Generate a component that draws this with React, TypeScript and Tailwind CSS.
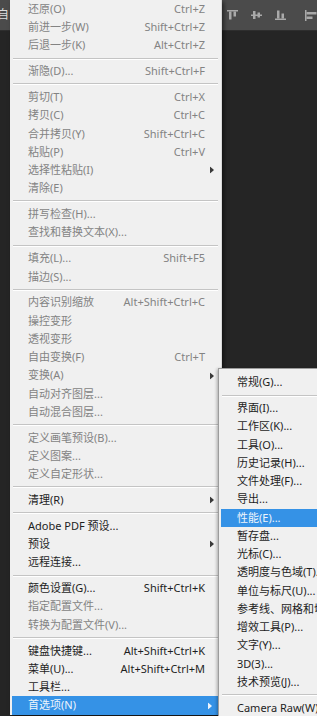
import clsx from "clsx";

type Item =
  | "sep"
  | { t: string; k?: string; d?: boolean; sub?: boolean; hl?: boolean };

// ─── Menu data ───────────────────────────────────────────────────────────────

const editMenu: Item[] = [
  { t: "还原(O)", k: "Ctrl+Z", d: true },
  { t: "前进一步(W)", k: "Shift+Ctrl+Z", d: true },
  { t: "后退一步(K)", k: "Alt+Ctrl+Z", d: true },
  "sep",
  { t: "渐隐(D)...", k: "Shift+Ctrl+F", d: true },
  "sep",
  { t: "剪切(T)", k: "Ctrl+X", d: true },
  { t: "拷贝(C)", k: "Ctrl+C", d: true },
  { t: "合并拷贝(Y)", k: "Shift+Ctrl+C", d: true },
  { t: "粘贴(P)", k: "Ctrl+V", d: true },
  { t: "选择性粘贴(I)", d: true, sub: true },
  { t: "清除(E)", d: true },
  "sep",
  { t: "拼写检查(H)...", d: true },
  { t: "查找和替换文本(X)...", d: true },
  "sep",
  { t: "填充(L)...", k: "Shift+F5", d: true },
  { t: "描边(S)...", d: true },
  "sep",
  { t: "内容识别缩放", k: "Alt+Shift+Ctrl+C", d: true },
  { t: "操控变形", d: true },
  { t: "透视变形", d: true },
  { t: "自由变换(F)", k: "Ctrl+T", d: true },
  { t: "变换(A)", d: true, sub: true },
  { t: "自动对齐图层...", d: true },
  { t: "自动混合图层...", d: true },
  "sep",
  { t: "定义画笔预设(B)...", d: true },
  { t: "定义图案...", d: true },
  { t: "定义自定形状...", d: true },
  "sep",
  { t: "清理(R)", sub: true },
  "sep",
  { t: "Adobe PDF 预设..." },
  { t: "预设", sub: true },
  { t: "远程连接..." },
  "sep",
  { t: "颜色设置(G)...", k: "Shift+Ctrl+K" },
  { t: "指定配置文件...", d: true },
  { t: "转换为配置文件(V)...", d: true },
  "sep",
  { t: "键盘快捷键...", k: "Alt+Shift+Ctrl+K" },
  { t: "菜单(U)...", k: "Alt+Shift+Ctrl+M" },
  { t: "工具栏..." },
  { t: "首选项(N)", sub: true, hl: true },
];

const prefsMenu: Item[] = [
  { t: "常规(G)..." },
  "sep",
  { t: "界面(I)..." },
  { t: "工作区(K)..." },
  { t: "工具(O)..." },
  { t: "历史记录(H)..." },
  { t: "文件处理(F)..." },
  { t: "导出..." },
  { t: "性能(E)...", hl: true },
  { t: "暂存盘..." },
  { t: "光标(C)..." },
  { t: "透明度与色域(T)..." },
  { t: "单位与标尺(U)..." },
  { t: "参考线、网格和切片(S)..." },
  { t: "增效工具(P)..." },
  { t: "文字(Y)..." },
  { t: "3D(3)..." },
  { t: "技术预览(J)..." },
  "sep",
  { t: "Camera Raw(W)..." },
];

// ─── Pieces ──────────────────────────────────────────────────────────────────

function Arrow({ light }: { light?: boolean }) {
  return (
    <svg width="4" height="7" viewBox="0 0 4 7" className="absolute right-[7px] top-1/2 -translate-y-1/2">
      <path d="M0 0 L4 3.5 L0 7 Z" fill={light ? "#eef5fc" : "#3a3a3a"} />
    </svg>
  );
}

function Separator() {
  return (
    <div className="h-[7.6px] flex flex-col justify-center px-[3px]">
      <div className="h-px bg-[#c4c4c4]" />
      <div className="h-px bg-white" />
    </div>
  );
}

function Row({ item }: { item: Exclude<Item, "sep"> }) {
  return (
    <div
      className={clsx(
        "relative flex items-center h-[18.25px] pr-[16px] whitespace-nowrap",
        item.hl
          ? "bg-[#3592e6] text-[#eef5fc] mx-[2px] pl-[16px]"
          : item.d
            ? "text-[#838383] pl-[18px]"
            : "text-[#1e1e1e] pl-[18px]"
      )}
    >
      <span className="flex-1">{item.t}</span>
      {item.k && <span>{item.k}</span>}
      {item.sub && <Arrow light={item.hl} />}
    </div>
  );
}

function Menu({ items }: { items: Item[] }) {
  return (
    <>
      {items.map((it, i) => (it === "sep" ? <Separator key={i} /> : <Row key={i} item={it} />))}
    </>
  );
}

function AlignIcons() {
  return (
    <div className="flex items-center gap-[13px] pl-[12px] text-[#a9a9a9]">
      {/* align top */}
      <svg width="11" height="10" viewBox="0 0 11 10" fill="currentColor">
        <rect x="0" y="0" width="11" height="1.5" />
        <rect x="2" y="1.5" width="2.5" height="8" />
        <rect x="6.5" y="1.5" width="2.5" height="5" />
      </svg>
      {/* align vertical centers */}
      <svg width="11" height="10" viewBox="0 0 11 10" fill="currentColor">
        <rect x="0" y="4.5" width="11" height="1.5" />
        <rect x="2" y="1" width="2.5" height="8" />
        <rect x="6.5" y="2.5" width="2.5" height="5" />
      </svg>
      {/* align bottom */}
      <svg width="11" height="10" viewBox="0 0 11 10" fill="currentColor">
        <rect x="0" y="8.5" width="11" height="1.5" />
        <rect x="2" y="0.5" width="2.5" height="8" />
        <rect x="6.5" y="3.5" width="2.5" height="5" />
      </svg>
      {/* align left */}
      <svg width="12" height="11" viewBox="0 0 12 11" fill="currentColor" className="ml-[6px]">
        <rect x="0" y="0" width="1.5" height="11" />
        <rect x="1.5" y="2" width="10" height="2.5" />
        <rect x="1.5" y="6.5" width="6" height="2.5" />
      </svg>
    </div>
  );
}

// ─── Page ────────────────────────────────────────────────────────────────────

export default function App() {
  return (
    <div className="relative w-[317px] h-[716px] overflow-hidden bg-[#252525] font-['Noto_Sans','Noto_Sans_CJK_SC',sans-serif] text-[11px]">
      {/* options bar */}
      <div className="h-[31px] bg-[#4b4b4b] border-b border-[#2e2e2e] flex items-center">
        <span className="-ml-[3px] w-[222px] text-[#dcdcdc] text-[12px]">自</span>
        <AlignIcons />
      </div>

      {/* Edit menu */}
      <div className="absolute left-[10px] top-0 w-[212px] bg-[#f0f0f0] border-r border-[#d8d8d8] shadow-[2px_2px_4px_rgba(0,0,0,0.5)]">
        <Menu items={editMenu} />
      </div>

      {/* Preferences submenu */}
      <div className="absolute left-[218px] top-[368px] w-[130px] bg-[#f0f0f0] border border-[#9c9c9c] pt-[4.5px] pb-2 shadow-[-1px_1px_3px_rgba(0,0,0,0.3)]">
        <Menu items={prefsMenu} />
      </div>
    </div>
  );
}
